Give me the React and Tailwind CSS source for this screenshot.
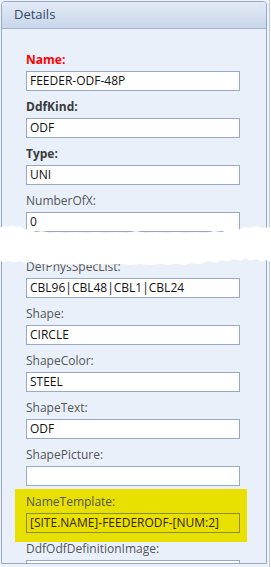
import React from "react";

const font = { fontFamily: '"Open Sans", "Noto Sans", sans-serif' };

function Field({ label, value, kind = "normal" }) {
  const labelCls =
    kind === "required"
      ? "text-[#ff0000] font-bold"
      : kind === "bold"
      ? "text-[#3a3a3a] font-bold"
      : "text-[#555555]";
  return (
    <div className="mb-[7px]">
      <div className={`h-[18px] leading-[18px] text-[12px] ${labelCls}`}>{label}</div>
      <div className="mt-[2px] h-[20px] w-[214px] border border-[#98a9c6] bg-white pl-[3px] text-[12px] leading-[18px] text-[#111] whitespace-nowrap overflow-hidden">
        {value}
      </div>
    </div>
  );
}

export default function App() {
  return (
    <div className="relative w-[271px] h-[567px] bg-white overflow-hidden" style={font}>
      <div className="w-[270px] h-[567px] border-r border-[#c3cfe0] bg-[#edf2f9] pl-[1px] pt-[1px]">
        <div className="w-[266px] h-[563px] border border-[#97a9c6] rounded-t-[4px] overflow-hidden bg-[#e9f0fa] flex flex-col">
          <div className="h-[27px] shrink-0 border-b border-[#a3b4cf] bg-gradient-to-b from-[#e2eaf6] to-[#c9d7ea] flex items-center pl-[12px] text-[13px] text-[#34466a]">
            Details
          </div>
          <div className="pt-[22px] pl-[24px]">
            <Field label="Name:" value="FEEDER-ODF-48P" kind="required" />
            <Field label="DdfKind:" value="ODF" kind="bold" />
            <Field label="Type:" value="UNI" kind="bold" />
            <Field label="NumberOfX:" value="0" />
            <div className="h-[19px]" />
            <Field label="DefPhysSpecList:" value="CBL96|CBL48|CBL1|CBL24" />
            <Field label="Shape:" value="CIRCLE" />
            <Field label="ShapeColor:" value="STEEL" />
            <Field label="ShapeText:" value="ODF" />
            <Field label="ShapePicture:" value="" />
            <div className="-ml-[11px] pl-[11px] w-[232px] -mt-[4px] pt-[4px] pb-[9px] -mb-[2px] bg-[#e8e100]">
              <div className="h-[18px] leading-[18px] text-[12px] text-[#555555]">NameTemplate:</div>
              <div className="mt-[2px] h-[20px] w-[214px] border border-[#8c8a3c] pl-[3px] text-[12px] leading-[18px] text-[#3a2200] whitespace-nowrap overflow-hidden">
                [SITE.NAME]-FEEDERODF-[NUM:2]
              </div>
            </div>
            <Field label="DdfOdfDefinitionImage:" value="" />
          </div>
        </div>
      </div>
      <svg className="absolute left-0 top-[222px]" width="271" height="48" viewBox="0 0 271 48">
        <polygon
          fill="#ffffff"
          points="0,6 4,4 8,5 12,3 16,5 20,4 24,7 30,8 36,10 42,9 50,11 58,10 66,11 76,10 86,11 96,10 106,11 116,10 126,11 136,9 146,11 156,10 166,11 176,10 186,11 196,10 206,11 214,9 222,10 230,7 238,8 244,5 250,6 256,4 262,6 271,5 271,40 266,38 262,40 256,37 250,39 246,36 240,39 234,37 228,40 222,38 216,41 208,39 200,42 192,41 184,43 176,42 168,43 160,42 150,43 140,42 130,43 120,42 110,43 100,42 90,43 80,42 70,43 60,42 50,43 40,42 32,40 26,41 20,39 14,40 8,39 4,40 0,39"
        />
      </svg>
    </div>
  );
}
